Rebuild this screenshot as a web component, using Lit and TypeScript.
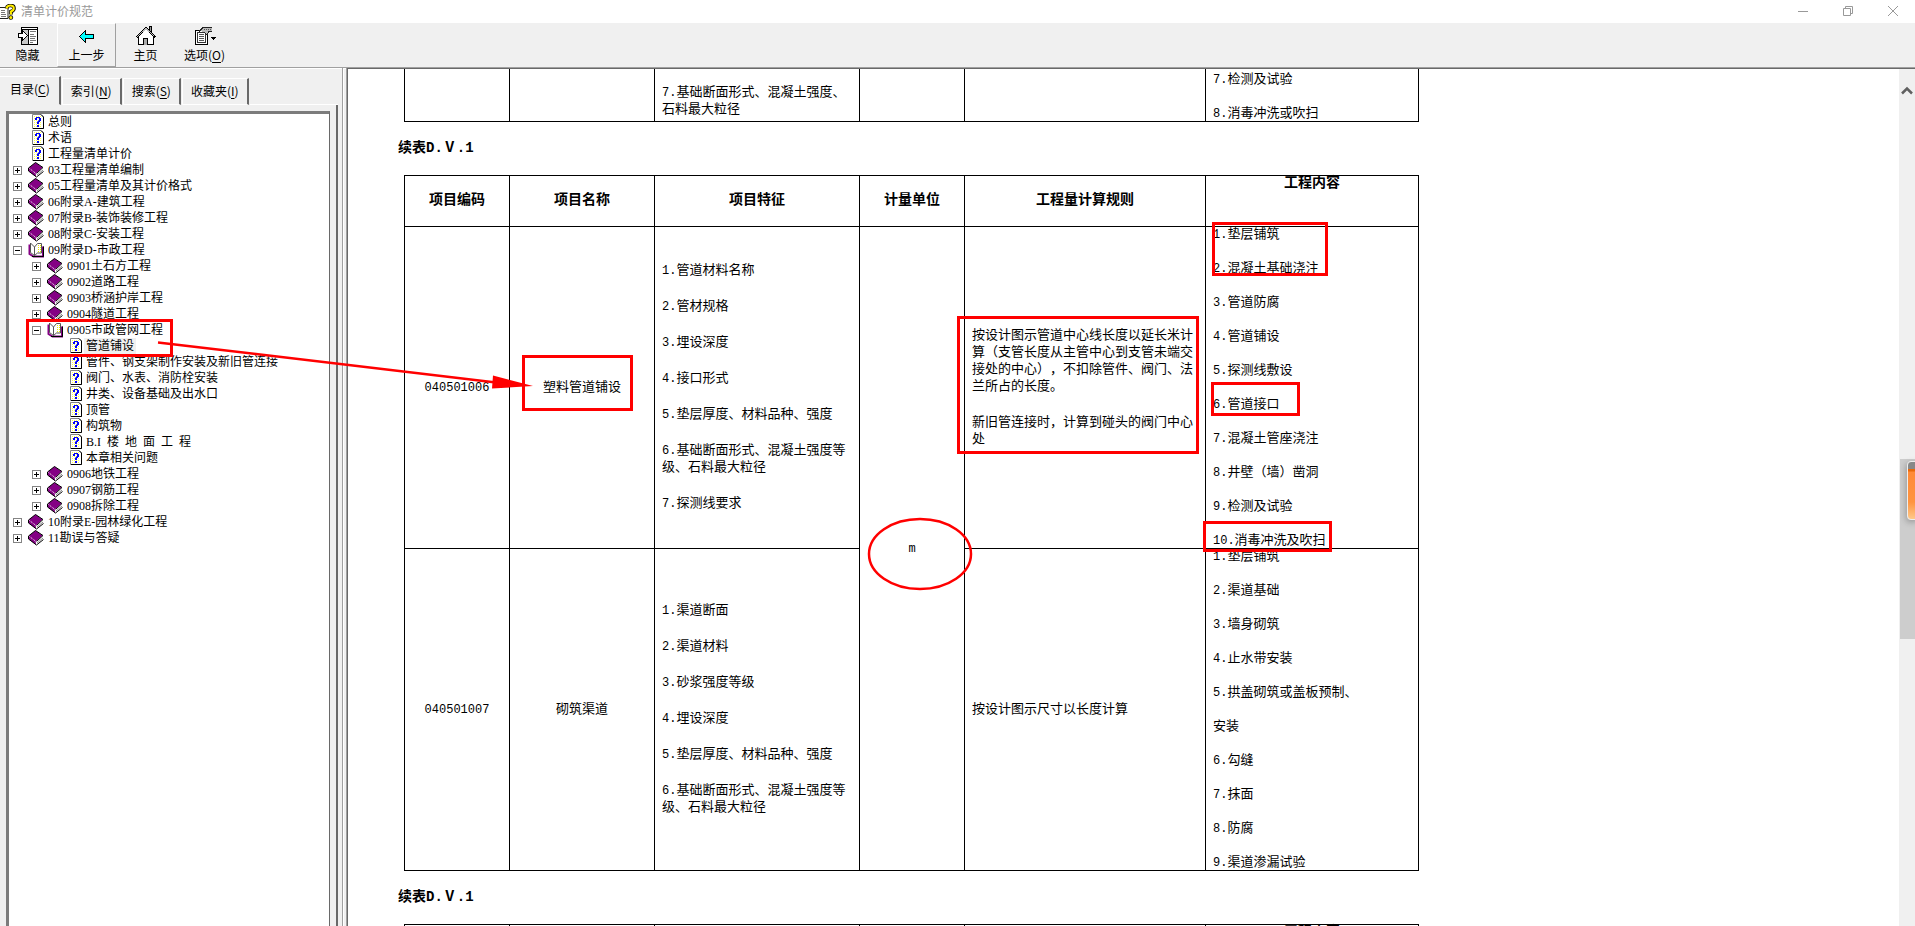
import { LitElement, html, css, svg, nothing, TemplateResult } from "lit";
import { customElement, property, state } from "lit/decorators.js";
import { classMap } from "lit/directives/class-map.js";

/* ---------- icons ---------- */

const appIcon = html`<svg width="16" height="16" viewBox="0 0 16 16" aria-hidden="true">
  <path d="M-1 3.500h9v11h-9z" fill="#fff" stroke="#222" />
  <path d="M1 6.500h4M1 8.500h4M1 10.500h5M1 12.500h5" stroke="#777" />
  <path d="M6.500 4.500Q7 1.500 10.500 1.500T14 4.500Q14 6.500 11 7.500V10.500" fill="none" stroke="#000" stroke-width="3.600" />
  <circle cx="10.800" cy="13.500" r="2.300" fill="#000" />
  <path d="M6.500 4.500Q7 1.500 10.500 1.500T13.700 4.500Q13.700 6.500 11 7.500V10.500" fill="none" stroke="#ffec00" stroke-width="2.200" />
  <circle cx="10.800" cy="13.500" r="1.500" fill="#ffec00" />
</svg>`;

const hideIcon = html`<svg width="20" height="20" viewBox="0 0 20 20" shape-rendering="crispEdges" aria-hidden="true">
  <path d="M3.500 1.500h16v17h-16z" fill="#fff" stroke="#000" />
  <path d="M3 3.500h17M10.500 3v16" stroke="#000" />
  <path d="M12 5.500h6M12 8.500h4M12 10.500h6M12 12.500h5M12 14.500h6M12 16.500h3" stroke="#777" />
  <path d="M4 4h6v14h-6z" fill="#c8c8c8" />
  <path d="M.5 7.500h4v-3l5 5-5 5v-3h-4z" fill="#fff" stroke="#000" />
</svg>`;

const backIcon = html`<svg width="20" height="20" viewBox="0 0 20 20" shape-rendering="crispEdges" aria-hidden="true">
  <path d="M2.500 10.500 8.500 4.500v4h8v4h-8v4z" fill="#00ffff" stroke="#000" />
</svg>`;

const homeIcon = html`<svg width="20" height="20" viewBox="0 0 20 20" shape-rendering="crispEdges" aria-hidden="true">
  <path d="M2.500 10.500v8h15v-8L10 3z" fill="#fff" stroke="#000" />
  <path d="M13.500 5V.5h2V8" fill="#999" stroke="#000" />
  <path d="M.5 11.500 10 1.500l9.500 10" fill="none" stroke="#000" stroke-width="2" />
  <path d="M1.500 10.500 10 2.500l8.500 8" fill="none" stroke="#bbb" />
  <path d="M7.500 18.500v-6h4v6" fill="#aaa" stroke="#000" />
</svg>`;

const optionsIcon = html`<svg width="22" height="20" viewBox="0 0 22 20" shape-rendering="crispEdges" aria-hidden="true">
  <path d="M1.500 4.500h12v14h-12z" fill="#fff" stroke="#000" />
  <path d="M3.500 6.500h8v10h-8z" fill="#fff" stroke="#333" />
  <path d="M5 8.500h5M5 10.500h5M5 12.500h5M5 14.500h5" stroke="#555" />
  <path d="M5 5l4-4h9v5h-3l-2 3-3-3z" fill="#bbb" />
  <path d="M5 5.500l4-4h9M10 6.500l3 2 2-3h3" fill="none" stroke="#222" />
  <path d="M10 3.500h8" stroke="#555" stroke-dasharray="1 1" />
  <path d="M17 11h5v1h-1v1h-1v1h-1v-1h-1v-1h-1z" />
</svg>`;

const topicIcon = svg`<path d="M1.500.5H10l2.500 2.500v11.500h-11z" fill="#fff" stroke="#848484" />
  <path d="M3 2.500h7M3 4.500h8M3 6.500h8M3 8.500h8M3 10.500h8M3 12.500h8" stroke="#ffff50" stroke-dasharray="1 1" />
  <path d="M10 .5l2.500 2.500v11.500h-10.500" fill="none" stroke="#000" />
  <path d="M4 4h1v-1h4v1h1v3h-1v1h-1v2h-2v-2.500h1v-1h1v-2.500h-2v2h-2zM6 11h2v2h-2z" fill="#0000ff" />`;

const bookIcon = svg`<path d="M.5 6 7.500 .5 14.500 5.500 8 11.500v3.500L.5 9z" fill="#840084" />
  <path d="M8.500 11.500l6.500-5.500v3.500l-6.500 5z" fill="#fff" />
  <path d="M9 13l6-5" stroke="#888" />
  <path d="M.5 9V6L7.500 .5 15 5.500 8.500 11.500M15.500 9.500 8.500 15 .5 9" fill="none" stroke="#000" />
  <path d="M1.500 6.500 8 11.500v2" fill="none" stroke="#fff" stroke-dasharray="1 1" />`;

const openBookIcon = svg`<path d="M1.500 2.500v9.500l4 2.500h9.500v-10" fill="#fff" stroke="#840084" stroke-width="2" />
  <path d="M2.500 1l4 4v8.500l-4-3z" fill="#fff" stroke="#555" />
  <path d="M6.500 5l3-3.500h4v9.500h-4l-3 2.500z" fill="#fff" stroke="#555" />
  <path d="M10.500 3v7M12.500 3v7" stroke="#e8e800" stroke-dasharray="1 1" />
  <path d="M4 14.500h11.500v-10" fill="none" stroke="#000" />`;

/* ---------- contents tree ---------- */

interface TreeNode {
  id: string;
  label: string;
  children?: TreeNode[];
}

const topic = (label: string): TreeNode => ({ id: label, label });
const book = (label: string, children: TreeNode[] = []): TreeNode => ({ id: label, label, children });

const TREE: TreeNode[] = [
  topic("总则"),
  topic("术语"),
  topic("工程量清单计价"),
  book("03工程量清单编制"),
  book("05工程量清单及其计价格式"),
  book("06附录A-建筑工程"),
  book("07附录B-装饰装修工程"),
  book("08附录C-安装工程"),
  book("09附录D-市政工程", [
    book("0901土石方工程"),
    book("0902道路工程"),
    book("0903桥涵护岸工程"),
    book("0904隧道工程"),
    book("0905市政管网工程", [
      topic("管道铺设"),
      topic("管件、钢支架制作安装及新旧管连接"),
      topic("阀门、水表、消防栓安装"),
      topic("井类、设备基础及出水口"),
      topic("顶管"),
      topic("构筑物"),
      topic("B.I\u2002楼\u2002地\u2002面\u2002工\u2002程"),
      topic("本章相关问题"),
    ]),
    book("0906地铁工程"),
    book("0907钢筋工程"),
    book("0908拆除工程"),
  ]),
  book("10附录E-园林绿化工程"),
  book("11勘误与答疑"),
];

@customElement("contents-tree")
export class ContentsTree extends LitElement {
  @state() private open = new Set(["09附录D-市政工程", "0905市政管网工程"]);
  @state() private selected = "管道铺设";

  static styles = css`
    :host {
      display: block;
      flex: 1;
      min-height: 0;
      overflow: hidden;
      background: #fff;
      border: 1px solid #696969;
      border-width: 3px 1px 0 3px;
      border-color: #7c7c7c #696969 #696969 #7c7c7c;
      font: 12px/16px "Liberation Serif", "Noto Sans CJK SC", sans-serif;
      color: #000;
    }
    ul {
      list-style: none;
      margin: 0;
      padding: 0;
    }
    ul ul {
      padding-left: 19px;
    }
    .row {
      display: flex;
      align-items: center;
      height: 16px;
      padding-left: 4px;
      white-space: nowrap;
    }
    .expander {
      flex: none;
      width: 9px;
      height: 9px;
      padding: 0;
      border: 0;
      background: none;
      display: block;
    }
    .expander svg,
    .icon {
      display: block;
    }
    .icon {
      flex: none;
      margin: 0 2px 0 6px;
    }
    a {
      color: inherit;
      text-decoration: none;
      padding: 0 2px;
    }
    .selected {
      background: #f0f0f0;
    }
  `;

  private toggle(id: string) {
    const next = new Set(this.open);
    next.has(id) ? next.delete(id) : next.add(id);
    this.open = next;
  }

  private pick(e: Event, id: string) {
    e.preventDefault();
    this.selected = id;
  }

  private node(n: TreeNode): TemplateResult {
    const isBook = !!n.children;
    const isOpen = this.open.has(n.id);
    return html`<li role="treeitem">
      <div class="row">
        ${isBook
          ? html`<button class="expander" aria-label=${n.label} @click=${() => this.toggle(n.id)}>
              <svg width="9" height="9" shape-rendering="crispEdges">
                <path d="M.5 .5h8v8h-8z" fill="#fff" stroke="#848484" />
                <path d=${isOpen ? "M2 4.500h5" : "M2 4.500h5M4.500 2v5"} stroke="#000" />
              </svg>
            </button>`
          : html`<span class="expander"></span>`}
        <svg class="icon" width="16" height="16" viewBox=${isBook ? "0 0 16 16" : "-3 0 16 16"} aria-hidden="true">
          ${isBook ? (isOpen ? openBookIcon : bookIcon) : topicIcon}
        </svg>
        <a href="#" class=${classMap({ selected: n.id === this.selected })} @click=${(e: Event) => this.pick(e, n.id)}
          >${n.label}</a
        >
      </div>
      ${isBook && isOpen && n.children!.length
        ? html`<ul role="group">
            ${n.children!.map((c) => this.node(c))}
          </ul>`
        : nothing}
    </li>`;
  }

  render() {
    return html`<ul role="tree">
      ${TREE.map((n) => this.node(n))}
    </ul>`;
  }
}

/* ---------- specification tables ---------- */

interface Item {
  code: string;
  name: string;
  features: string[];
  rules: string[];
  works: string[];
}

const ITEMS: Item[] = [
  {
    code: "040501006",
    name: "塑料管道铺设",
    features: [
      "1.管道材料名称",
      "2.管材规格",
      "3.埋设深度",
      "4.接口形式",
      "5.垫层厚度、材料品种、强度",
      "6.基础断面形式、混凝土强度等级、石料最大粒径",
      "7.探测线要求",
    ],
    rules: [
      "按设计图示管道中心线长度以延长米计算（支管长度从主管中心到支管未端交接处的中心），不扣除管件、阀门、法兰所占的长度。",
      "新旧管连接时，计算到碰头的阀门中心处",
    ],
    works: [
      "1.垫层铺筑",
      "2.混凝土基础浇注",
      "3.管道防腐",
      "4.管道铺设",
      "5.探测线敷设",
      "6.管道接口",
      "7.混凝土管座浇注",
      "8.井壁（墙）凿洞",
      "9.检测及试验",
      "10.消毒冲洗及吹扫",
    ],
  },
  {
    code: "040501007",
    name: "砌筑渠道",
    features: [
      "1.渠道断面",
      "2.渠道材料",
      "3.砂浆强度等级",
      "4.埋设深度",
      "5.垫层厚度、材料品种、强度",
      "6.基础断面形式、混凝土强度等级、石料最大粒径",
    ],
    rules: ["按设计图示尺寸以长度计算"],
    works: [
      "1.垫层铺筑",
      "2.渠道基础",
      "3.墙身砌筑",
      "4.止水带安装",
      "5.拱盖砌筑或盖板预制、",
      "安装",
      "6.勾缝",
      "7.抹面",
      "8.防腐",
      "9.渠道渗漏试验",
    ],
  },
];

@customElement("spec-document")
export class SpecDocument extends LitElement {
  static styles = css`
    :host {
      display: block;
      flex: 1;
      min-width: 0;
      overflow: hidden;
      background: #fff;
      color: #000;
      font: 13px/17px "Liberation Serif", "Noto Sans CJK SC", sans-serif;
      text-spacing-trim: space-all;
    }
    h2 {
      margin: 18px 0 18px 50px;
      font-size: 14px;
      line-height: 17px;
      font-family: "Liberation Mono", "Noto Sans CJK SC", sans-serif;
    }
    table {
      width: 1015px;
      margin-left: 56px;
      border-collapse: collapse;
      table-layout: fixed;
    }
    .c1 { width: 105px; }
    .c2 { width: 145px; }
    .c3 { width: 205px; }
    .c4 { width: 105px; }
    .c5 { width: 241px; }
    .c6 { width: 213px; }
    th,
    td {
      border: 1px solid #000;
      padding: 0 7px 2px;
      vertical-align: middle;
      text-align: left;
    }
    thead tr {
      height: 51px;
    }
    th {
      font-size: 14px;
      line-height: 13px;
      text-align: center;
    }
    th.top {
      vertical-align: top;
    }
    td.mid {
      text-align: center;
    }
    .tail tr {
      height: 52px;
    }
    .tail td {
      border-top: 0;
      vertical-align: bottom;
    }
    .tail .spaced {
      padding-bottom: 4px;
    }
    p {
      margin: 0;
    }
    .spaced p + p {
      margin-top: 19px;
    }
    .works p {
      line-height: 13px;
    }
    .works p + p {
      margin-top: 21px;
    }
    .num {
      font-family: "Liberation Mono", monospace;
      font-size: 12px;
      line-height: 0;
    }
  `;

  private line(text: string) {
    const m = /^(\d+\.)(.*)$/.exec(text);
    return m ? html`<p><span class="num">${m[1]}</span>${m[2]}</p>` : html`<p>${text}</p>`;
  }

  private cols() {
    return html`<colgroup>
      <col class="c1" /><col class="c2" /><col class="c3" /><col class="c4" /><col class="c5" /><col class="c6" />
    </colgroup>`;
  }

  private head() {
    return html`<thead>
      <tr>
        <th scope="col">项目编码</th>
        <th scope="col">项目名称</th>
        <th scope="col">项目特征</th>
        <th scope="col">计量单位</th>
        <th scope="col">工程量计算规则</th>
        <th scope="col" class="top">工程内容</th>
      </tr>
    </thead>`;
  }

  render() {
    return html`
      <table class="tail">
        ${this.cols()}
        <tbody>
          <tr>
            <td></td>
            <td></td>
            <td class="spaced">${this.line("7.基础断面形式、混凝土强度、石料最大粒径")}</td>
            <td></td>
            <td></td>
            <td class="works">${["7.检测及试验", "8.消毒冲洗或吹扫"].map((t) => this.line(t))}</td>
          </tr>
        </tbody>
      </table>
      <h2>续表D.Ⅴ.1</h2>
      <table>
        ${this.cols()} ${this.head()}
        <tbody>
          ${ITEMS.map(
            (it, i) => html`<tr>
              <td class="mid"><span class="num">${it.code}</span></td>
              <td class="mid">${it.name}</td>
              <td class="spaced">${it.features.map((t) => this.line(t))}</td>
              ${i === 0 ? html`<td class="mid" rowspan=${ITEMS.length}><span class="num">m</span></td>` : nothing}
              <td class="spaced">${it.rules.map((t) => this.line(t))}</td>
              <td class="works">${it.works.map((t) => this.line(t))}</td>
            </tr>`
          )}
        </tbody>
      </table>
      <h2>续表D.Ⅴ.1</h2>
      <table>
        ${this.cols()} ${this.head()}
      </table>
    `;
  }
}

/* ---------- red review marks drawn over the window ---------- */

@customElement("review-marks")
export class ReviewMarks extends LitElement {
  static styles = css`
    :host {
      position: absolute;
      inset: 0;
      overflow: hidden;
      pointer-events: none;
    }
    svg {
      display: block;
      width: 100%;
      height: 100%;
    }
    .box,
    .ring,
    .shaft {
      fill: none;
      stroke: #f00;
      stroke-width: 3;
    }
    .ring,
    .shaft {
      stroke-width: 2.5;
    }
    .head {
      fill: #f00;
    }
  `;

  private boxes = [
    [27, 321, 144, 35],
    [523, 357, 108, 53],
    [958, 318, 239, 135],
    [1213, 224, 113, 51],
    [1212, 384, 86, 31],
    [1204, 523, 126, 28],
  ];

  render() {
    return html`<svg aria-hidden="true">
      ${this.boxes.map(
        ([x, y, w, h]) => svg`<rect class="box" x=${x + 0.5} y=${y - 0.5} width=${w} height=${h} />`
      )}
      <ellipse class="ring" cx="920" cy="554" rx="51" ry="35" />
      <path class="shaft" d="M158 342.500L496 382.500" />
      <path class="head" d="M493 375.500L533 386L492 388.500z" />
    </svg>`;
  }
}

/* ---------- window ---------- */

@customElement("app-root")
export class AppRoot extends LitElement {
  @property() caption = "清单计价规范";
  @state() private tab = 0;

  private tabs = [
    ["目录", "C"],
    ["索引", "N"],
    ["搜索", "S"],
    ["收藏夹", "I"],
  ];

  static styles = css`
    :host {
      display: flex;
      flex-direction: column;
      position: relative;
      height: 100vh;
      overflow: hidden;
      background: #f0f0f0;
      color: #000;
      font: 12px/16px "Noto Sans CJK SC", sans-serif;
    }
    button {
      font: inherit;
      color: inherit;
      background: none;
      border: 0;
      padding: 0;
    }
    u {
      text-underline-offset: 2px;
    }
    .titlebar {
      display: flex;
      align-items: center;
      height: 23px;
      background: #fff;
      color: #999;
    }
    .titlebar svg {
      display: block;
    }
    .caption {
      flex: 1;
      padding: 0 0 2px 5px;
    }
    .winbtn {
      width: 45px;
      height: 21px;
      display: grid;
      place-items: center;
      margin-bottom: 2px;
    }
    .toolbar {
      display: flex;
      height: 44px;
      margin-left: -2px;
    }
    .tool {
      display: flex;
      flex-direction: column;
      align-items: center;
      gap: 1px;
      box-sizing: border-box;
      width: 59px;
      padding-top: 2px;
      border: 1px solid transparent;
    }
    .raised {
      border-color: #fff #a0a0a0 #a0a0a0 #fff;
    }
    .tool svg {
      display: block;
    }
    .body {
      flex: 1;
      min-height: 0;
      display: flex;
    }
    .nav {
      flex: none;
      width: 342px;
      display: flex;
      flex-direction: column;
      border-top: 1px solid #a0a0a0;
      box-shadow: inset 0 1px #fff;
    }
    .tabs {
      display: flex;
      align-items: flex-end;
      gap: 1px;
      padding-top: 8px;
    }
    .tab {
      height: 27px;
      padding: 0 8px 1px;
      border: solid;
      border-width: 1px 2px 1px 1px;
      border-color: #fff #696969 #fff #fff;
    }
    .tab.active {
      height: 29px;
      padding: 0 9px 3px 10px;
      border-left-width: 0;
      border-bottom-color: #f0f0f0;
    }
    .fill {
      flex: 1;
      height: 1px;
      margin-right: 4px;
      background: #fff;
    }
    .panel {
      flex: 1;
      min-height: 0;
      display: flex;
      margin-right: 4px;
      padding: 6px 6px 0;
      border-right: 2px solid #696969;
    }
    .splitter {
      flex: none;
      width: 4px;
      box-sizing: border-box;
      border: solid;
      border-width: 1px 0 0 1px;
      border-color: #a0a0a0;
      box-shadow: inset 1px 1px #fff;
      cursor: ew-resize;
    }
    .view {
      flex: 1;
      min-width: 0;
      display: flex;
      border: solid #a0a0a0;
      border-width: 1px 0 0 1px;
      background: #fff;
    }
    .sunken {
      flex: 1;
      min-width: 0;
      display: flex;
      border: solid #696969;
      border-width: 1px 0 0 1px;
    }
    .scrollbar {
      flex: none;
      display: flex;
      flex-direction: column;
      width: 16px;
      background: #f0f0f0;
    }
    .up {
      height: 42px;
      display: grid;
      place-items: center;
    }
    .above {
      flex: 348;
    }
    .thumb {
      flex: 180;
      margin-left: 1px;
      background: #cdcdcd;
    }
    .below {
      flex: 287;
    }
    .widget {
      position: absolute;
      right: -4px;
      top: 461px;
      width: 10px;
      height: 57px;
      border: 1px solid #eee;
      border-radius: 4px;
      background: linear-gradient(#888 0 7px, #e8690b 7px 9px, #ff8a38 10px, #ff9440 40px, #ffc98a);
      box-shadow: -1px 2px 6px #0004;
    }
  `;

  render() {
    return html`
      <header class="titlebar">
        ${appIcon}
        <span class="caption">${this.caption}</span>
        <button class="winbtn" aria-label="最小化">
          <svg width="10" height="10"><path d="M0 5.500h10" stroke="#999" /></svg>
        </button>
        <button class="winbtn" aria-label="还原">
          <svg width="10" height="10" fill="none" stroke="#999">
            <path d="M.5 2.500h7v7h-7zM2.500 2.500v-2h7v7h-2" />
          </svg>
        </button>
        <button class="winbtn" aria-label="关闭">
          <svg width="10" height="10"><path d="M0 0l10 10M10 0L0 10" stroke="#999" /></svg>
        </button>
      </header>
      <nav class="toolbar">
        <button class="tool">${hideIcon}<span>隐藏</span></button>
        <button class="tool raised">${backIcon}<span>上一步</span></button>
        <button class="tool">${homeIcon}<span>主页</span></button>
        <button class="tool">${optionsIcon}<span>选项(<u>O</u>)</span></button>
      </nav>
      <div class="body">
        <aside class="nav">
          <div class="tabs" role="tablist">
            ${this.tabs.map(
              ([label, key], i) => html`<button
                role="tab"
                aria-selected=${i === this.tab}
                class=${classMap({ tab: true, active: i === this.tab })}
                @click=${() => (this.tab = i)}
              >
                ${label}(<u>${key}</u>)
              </button>`
            )}
            <div class="fill"></div>
          </div>
          <div class="panel"><contents-tree></contents-tree></div>
        </aside>
        <div class="splitter"></div>
        <main class="view">
          <div class="sunken">
            <spec-document></spec-document>
            <div class="scrollbar">
              <button class="up" aria-label="向上滚动">
                <svg width="12" height="9"><path d="M1 7.500L6 2.500L11 7.500" fill="none" stroke="#606060" stroke-width="2.500" /></svg>
              </button>
              <div class="above"></div>
              <div class="thumb"></div>
              <div class="below"></div>
            </div>
          </div>
        </main>
      </div>
      <div class="widget"></div>
      <review-marks></review-marks>
    `;
  }
}
